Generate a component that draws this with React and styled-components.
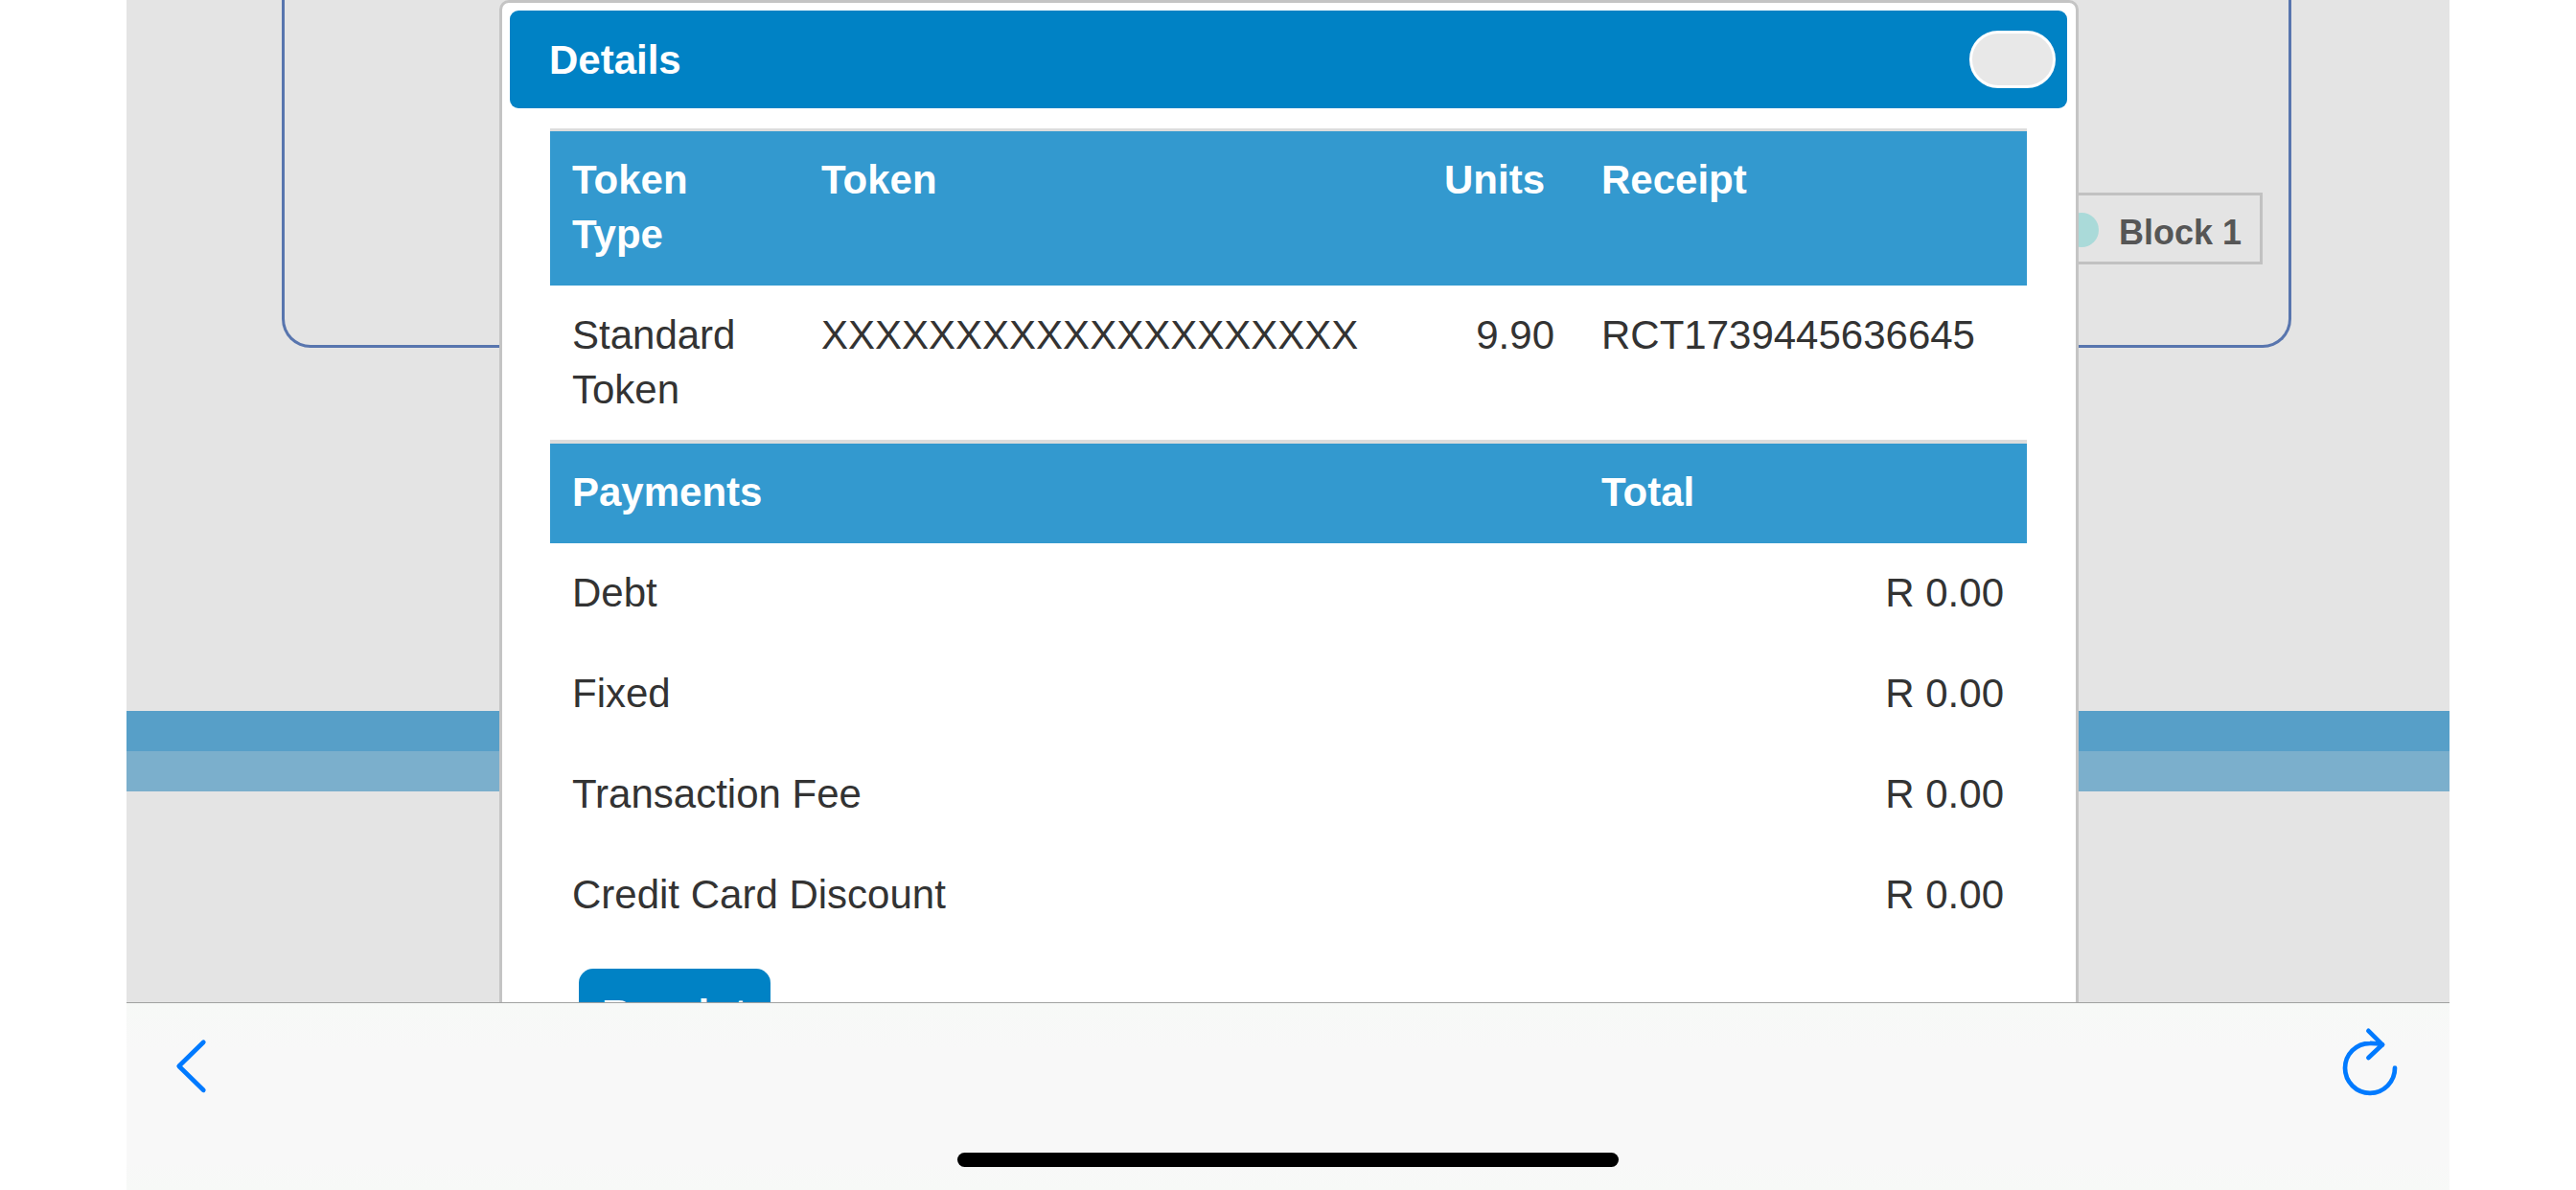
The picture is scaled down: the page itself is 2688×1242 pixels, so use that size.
import React from 'react';
import styled, { createGlobalStyle } from 'styled-components';

const GlobalStyle = createGlobalStyle`
  * { box-sizing: border-box; }
  body {
    margin: 0;
    background: #fff;
    font-family: "Liberation Sans", Arial, Helvetica, sans-serif;
    color: #333;
  }
`;

const Device = styled.div`
  display: flex;
  flex-direction: column;
  width: 2424px;
  height: 1242px;
  margin: 0 132px;
  overflow: hidden;
`;

const Viewport = styled.main`
  position: relative;
  flex: 0 0 1046px;
  overflow: hidden;
  background: #e4e4e4;
`;

const ChartCard = styled.section`
  display: flex;
  justify-content: flex-end;
  align-items: flex-end;
  width: 2097px;
  height: 363px;
  margin-left: 162px;
  padding: 0 27px 84px 0;
  border: 3px solid #5875ae;
  border-top: 0;
  border-radius: 0 0 30px 30px;
`;

const Legend = styled.div`
  display: flex;
  align-items: center;
  gap: 21px;
  height: 75px;
  padding: 0 19px 0 20px;
  border: 3px solid #c1c1c1;
  font-size: 36px;
  font-weight: bold;
  color: #565656;
`;

const LegendDot = styled.span`
  width: 36px;
  height: 36px;
  margin-top: 3px;
  border-radius: 50%;
  background: #aadad9;
`;

const LegendText = styled.span`
  padding-top: 8px;
`;

const Footer = styled.footer`
  margin-top: 379px;
`;

const Stripe = styled.div`
  height: 42px;
  background: ${(p) => p.$color};
`;

const Modal = styled.div`
  position: absolute;
  top: 0;
  left: 389px;
  width: 1648px;
  height: 1200px;
  padding: 8px 9px 8px 8px;
  border: 3px solid #c4c4c4;
  border-radius: 10px;
  background: #fff;
`;

const ModalHeader = styled.header`
  display: flex;
  justify-content: space-between;
  align-items: center;
  height: 102px;
  padding: 0 12px 0 41px;
  border-radius: 9px;
  background: #0082c5;
`;

const Title = styled.h1`
  margin: 0;
  font-size: 42px;
  line-height: 57px;
  color: #fff;
`;

const CloseButton = styled.button`
  width: 90px;
  height: 60px;
  border: 3px solid #fff;
  border-radius: 30px;
  background: #e8e8e8;
`;

const Table = styled.div`
  width: 1541px;
  margin: 21px 0 0 42px;
  font-size: 42px;
  line-height: 57px;
`;

const Row = styled.div`
  display: grid;
  grid-template-columns: 260px 650px 164px 467px;
  min-height: 105px;
`;

const HeadRow = styled(Row)`
  min-height: 104px;
  border-top: ${(p) => p.$line || 3}px solid #dcdcdc;
  box-sizing: content-box;
  background: #3399cf;
  color: #fff;
  font-weight: bold;
`;

const Cell = styled.div`
  grid-column: span ${(p) => p.$span || 1};
  padding: ${(p) => p.$top || 22}px ${(p) => p.$end || 24}px ${(p) => 47 - (p.$top || 22)}px 23px;
  text-align: ${(p) => (p.$right ? 'right' : 'left')};
`;

const ReceiptButton = styled.button`
  display: block;
  height: 95px;
  margin: 24px 0 0 72px;
  padding: 0 24px;
  border: 0;
  border-radius: 15px;
  background: #0082c5;
  color: #fff;
  font: bold 42px "Liberation Sans", Arial, sans-serif;
`;

const BrowserBar = styled.nav`
  display: flex;
  flex-direction: column;
  align-items: center;
  flex: 1;
  border-top: 1px solid #a1a2a1;
  background: linear-gradient(#f7f9f7, #f8f8f8 25%, #f8f8f8 85%, #f7f9f7);
`;

const BarButtons = styled.div`
  display: flex;
  justify-content: space-between;
  width: 100%;
  height: 156px;
  padding: 24px 48px 0;
`;

const Glyph = styled.svg`
  width: ${(p) => p.$w}px;
  height: 80px;
  fill: none;
  stroke: #007aff;
  stroke-width: 4.7;
  stroke-linecap: round;
  stroke-linejoin: round;
`;

const HomeIndicator = styled.div`
  width: 690px;
  height: 15px;
  border-radius: 7.5px;
  background: #000;
`;

const payments = [
  ['Debt', 'R 0.00'],
  ['Fixed', 'R 0.00'],
  ['Transaction Fee', 'R 0.00'],
  ['Credit Card Discount', 'R 0.00'],
];

export default function App() {
  return (
    <>
      <GlobalStyle />
      <Device>
        <Viewport>
          <ChartCard>
            <Legend>
              <LegendDot />
              <LegendText>Block 1</LegendText>
            </Legend>
          </ChartCard>
          <Footer>
            <Stripe $color="#579fc8" />
            <Stripe $color="#7bafcc" />
          </Footer>
          <Modal>
            <ModalHeader>
              <Title>Details</Title>
              <CloseButton aria-label="Close" />
            </ModalHeader>
            <Table>
              <HeadRow>
                <Cell>Token<br />Type</Cell>
                <Cell>Token</Cell>
                <Cell>Units</Cell>
                <Cell>Receipt</Cell>
              </HeadRow>
              <Row>
                <Cell $top={23}>Standard Token</Cell>
                <Cell $top={23}>XXXXXXXXXXXXXXXXXXXX</Cell>
                <Cell $top={23} $end={26} $right>9.90</Cell>
                <Cell $top={23}>RCT1739445636645</Cell>
              </Row>
              <HeadRow $line={4}>
                <Cell $span={3}>Payments</Cell>
                <Cell>Total</Cell>
              </HeadRow>
              {payments.map(([label, amount]) => (
                <Row key={label}>
                  <Cell $span={3} $top={23}>{label}</Cell>
                  <Cell $right $top={23}>{amount}</Cell>
                </Row>
              ))}
            </Table>
            <ReceiptButton>Receipt</ReceiptButton>
          </Modal>
        </Viewport>
        <BrowserBar>
          <BarButtons>
            <Glyph $w={40} viewBox="180 1071 40 80">
              <path d="M212.3 1087.7 L186.7 1112.7 L212.3 1137.8" />
            </Glyph>
            <Glyph $w={66} viewBox="2442 1071 66 80">
              <path d="M2499 1114.6 A26 26 0 1 1 2473 1088.8 Q2479 1088.6 2486 1090.3" />
              <path d="M2471.4 1075.8 L2486 1090.3 L2471.4 1104" />
            </Glyph>
          </BarButtons>
          <HomeIndicator />
        </BrowserBar>
      </Device>
    </>
  );
}
